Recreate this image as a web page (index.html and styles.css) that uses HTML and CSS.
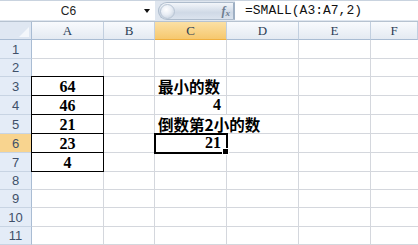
FILE: index.html
```html
<!DOCTYPE html>
<html>
<head>
<meta charset="utf-8">
<link rel="stylesheet" href="styles.css">
</head>
<body>
<div class="app">
  <div class="fbar">
    <div class="namebox"><span class="name">C6</span><span class="arrow"></span></div>
    <div class="fxbtn"><span class="bubble"></span><span class="fx">f<sub>x</sub></span></div>
    <div class="formula">=SMALL(A3:A7,2)</div>
  </div>
  <div class="sheet">
    <div class="corner"></div><div class="ch">A</div><div class="ch">B</div><div class="ch sel">C</div><div class="ch">D</div><div class="ch">E</div><div class="ch last">F</div>

    <div class="rh">1</div><div class="c"></div><div class="c"></div><div class="c"></div><div class="c"></div><div class="c"></div><div class="c last"></div>
    <div class="rh">2</div><div class="c"></div><div class="c"></div><div class="c"></div><div class="c"></div><div class="c"></div><div class="c last"></div>
    <div class="rh">3</div><div class="c box top">64</div><div class="c"></div><div class="c txt">最小的数</div><div class="c"></div><div class="c"></div><div class="c last"></div>
    <div class="rh">4</div><div class="c box">46</div><div class="c"></div><div class="c num">4</div><div class="c"></div><div class="c"></div><div class="c last"></div>
    <div class="rh">5</div><div class="c box">21</div><div class="c"></div><div class="c txt over">倒数第2小的数</div><div class="c"></div><div class="c"></div><div class="c last"></div>
    <div class="rh sel">6</div><div class="c box">23</div><div class="c"></div><div class="c num active">21</div><div class="c"></div><div class="c"></div><div class="c last"></div>
    <div class="rh">7</div><div class="c box">4</div><div class="c"></div><div class="c"></div><div class="c"></div><div class="c"></div><div class="c last"></div>
    <div class="rh">8</div><div class="c"></div><div class="c"></div><div class="c"></div><div class="c"></div><div class="c"></div><div class="c last"></div>
    <div class="rh">9</div><div class="c"></div><div class="c"></div><div class="c"></div><div class="c"></div><div class="c"></div><div class="c last"></div>
    <div class="rh">10</div><div class="c"></div><div class="c"></div><div class="c"></div><div class="c"></div><div class="c"></div><div class="c last"></div>
    <div class="rh">11</div><div class="c"></div><div class="c"></div><div class="c"></div><div class="c"></div><div class="c"></div><div class="c last"></div>
  </div>
</div>
</body>
</html>
```
FILE: styles.css
```css
* { box-sizing: border-box; }
html, body { margin: 0; padding: 0; background: #fff; }
.app { width: 418px; height: 245px; overflow: hidden; }

.fbar {
  height: 22px;
  display: flex;
  background: #dfe6ef;
  border-top: 1px solid #c9d3df;
  border-bottom: 1px solid #b6c2d0;
  padding-bottom: 1px;
}
.namebox {
  width: 155px;
  background: #fff;
  position: relative;
  display: flex;
  align-items: center;
  justify-content: center;
  font-family: "Liberation Sans", Arial, sans-serif;
  font-size: 12px;
  color: #222;
}
.name { margin-right: 18px; }
.arrow {
  position: absolute;
  left: 144px;
  top: 8px;
  width: 0; height: 0;
  border-left: 3px solid transparent;
  border-right: 3px solid transparent;
  border-top: 4px solid #111;
}
.fxbtn {
  margin-left: 3px;
  margin-top: 1px;
  width: 77px;
  height: 18px;
  border-radius: 9px 0 0 9px;
  background: linear-gradient(#f3f6fa, #cfd9e6 60%, #dbe3ee);
  border: 1px solid #aebccc;
  border-right: 2px solid #9fb0c4;
  display: flex;
  align-items: center;
  justify-content: space-between;
  padding-left: 1px;
  padding-right: 3px;
}
.bubble {
  width: 15px; height: 15px;
  border-radius: 50%;
  background: radial-gradient(circle at 40% 35%, #ffffff 0, #e9eef5 45%, #bcc9d8 100%);
  border: 1px solid #b8c5d4;
}
.fx {
  font-family: "Liberation Serif", serif;
  font-style: italic;
  font-weight: bold;
  font-size: 12px;
  color: #6d7c90;
}
.fx sub { font-size: 9px; vertical-align: -1px; }
.formula {
  flex: 1;
  background: #fff;
  padding-left: 10px;
  display: flex;
  align-items: center;
  font-family: "Liberation Mono", "DejaVu Sans Mono", monospace;
  font-size: 13px;
  color: #111;
}

.sheet {
  display: grid;
  grid-template-columns: 32px 72px 51px 72px 72px 72px 47px;
  grid-template-rows: 18px 19px 18px 19px 19px 19px 19px 19px 18px 18px 19px 18px;
}
.corner {
  background: #dfe7f2;
  border-right: 1px solid #a9bcd3;
  border-bottom: 1px solid #a9bcd3;
  position: relative;
}
.corner::after {
  content: "";
  position: absolute;
  right: 2px; bottom: 2px;
  width: 0; height: 0;
  border-left: 10px solid transparent;
  border-bottom: 10px solid #f4f7fb;
}
.ch {
  background: linear-gradient(#f8fafd, #e4eaf2);
  border-right: 1px solid #c2cfdf;
  border-bottom: 1px solid #a9bcd3;
  display: flex; align-items: center; justify-content: center;
  font-family: "Liberation Serif", serif;
  font-size: 13px;
  color: #2b3d55;
}
.ch.sel {
  background: linear-gradient(#fbe0a5, #f6c86e);
  border-bottom-color: #f0b040;
}
.rh {
  background: #e4ecf7;
  border-right: 1px solid #a9bcd3;
  border-bottom: 1px solid #c8d4e3;
  display: flex; align-items: center; justify-content: center;
  font-family: "Liberation Sans", Arial, sans-serif;
  font-size: 13px;
  color: #3f5069;
}
.rh.sel { background: #f8d48f; border-right-color: #f0b040; }

.c {
  border-right: 1px solid #d4d7dd;
  border-bottom: 1px solid #d4d7dd;
  font-family: "Liberation Serif", "Noto Sans CJK SC", serif;
  font-weight: bold;
  font-size: 16px;
  color: #000;
  display: flex; align-items: center;
  white-space: nowrap;
}
.c.last { border-right: none; }
.box {
  justify-content: center;
  border-right: 1px solid #000;
  border-bottom: 1px solid #000;
  margin-left: -1px;
  border-left: 1px solid #000;
  padding-top: 1px;
}
.box.top { border-top: 1px solid #000; margin-top: -1px; }
.txt {
  font-family: "Noto Sans CJK SC", sans-serif;
  font-size: 15.5px;
  padding-left: 3px;
}
.over { overflow: visible; position: relative; z-index: 2; border-right-color: transparent; }
.num { justify-content: flex-end; padding-right: 5px; }
.active {
  position: relative;
  outline: 2px solid #000;
  outline-offset: -1px;
  z-index: 3;
}
.active::after {
  content: "";
  position: absolute;
  right: -3px; bottom: -3px;
  width: 5px; height: 5px;
  background: #000;
  border: 1px solid #fff;
}
```
